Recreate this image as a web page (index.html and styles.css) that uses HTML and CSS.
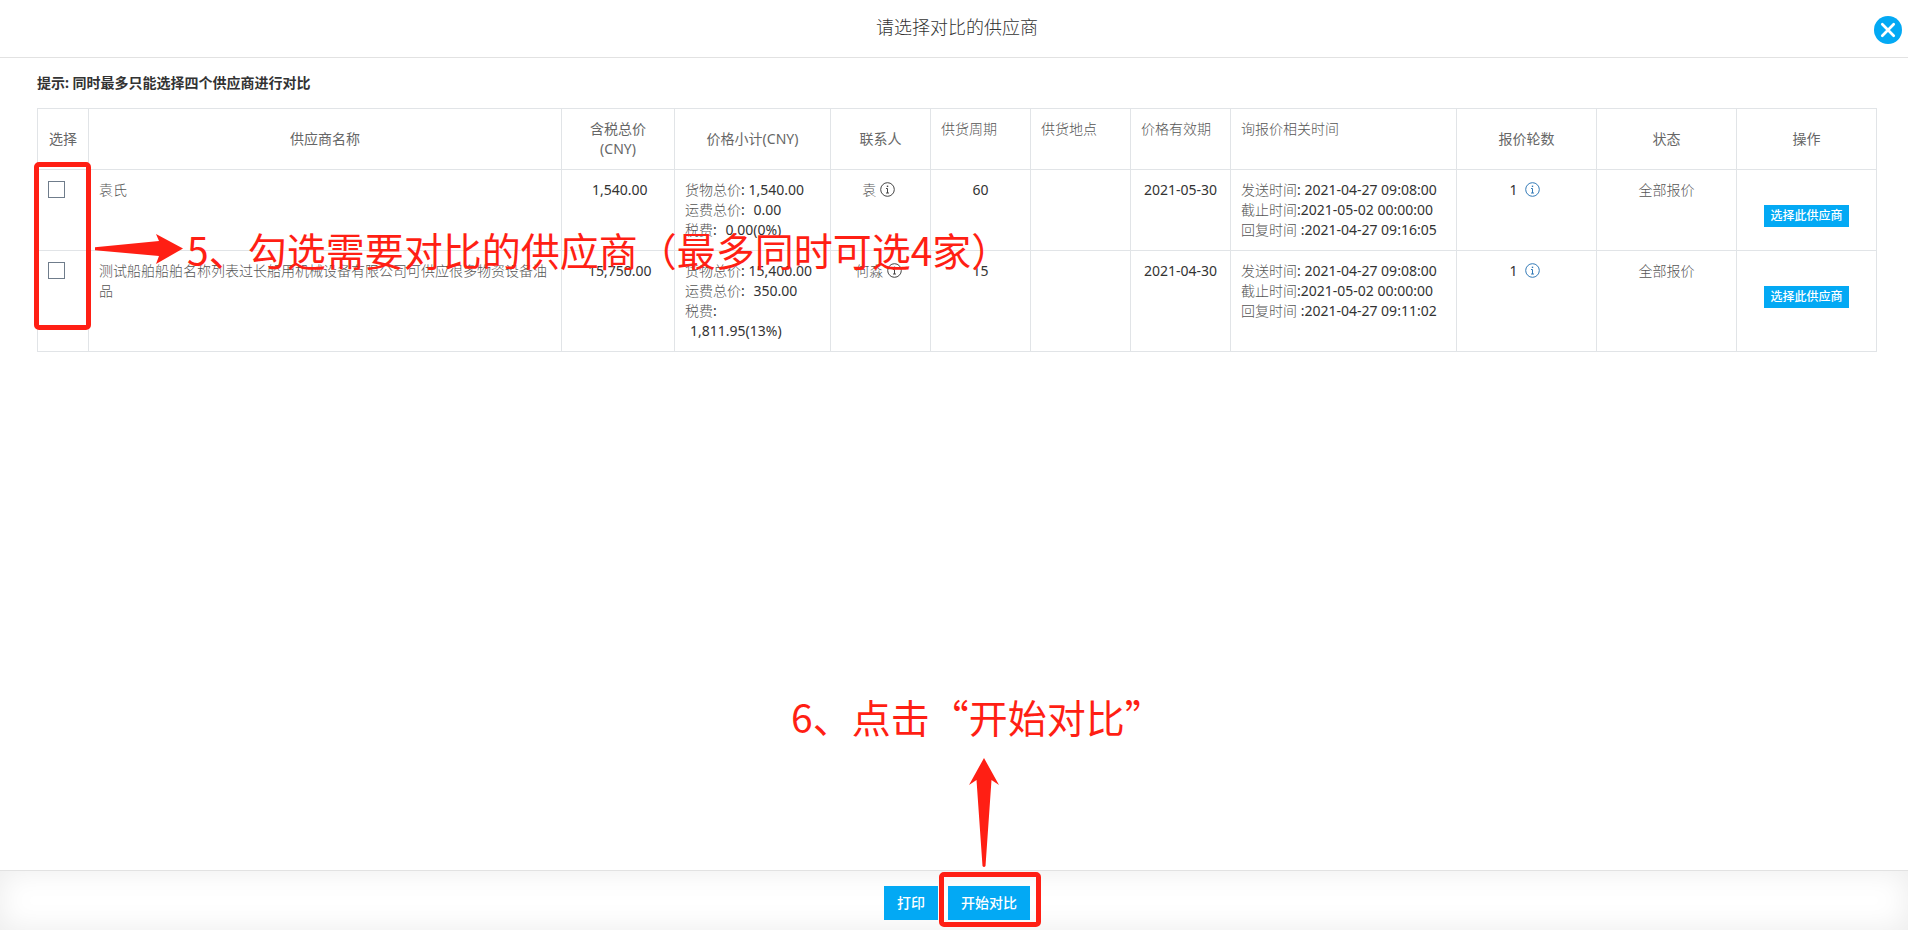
FILE: index.html
```html
<!DOCTYPE html>
<html lang="zh-CN">
<head>
<meta charset="utf-8">
<title>请选择对比的供应商</title>
<link rel="stylesheet" href="styles.css">
</head>
<body>
<svg class="sprite" aria-hidden="true">
  <symbol id="icon-info" viewBox="0 0 15 15">
    <circle cx="7.5" cy="7.5" r="6.8" fill="none" stroke="currentColor" stroke-width="1"/>
    <path d="M6 6.5h1.5v4.5M6 11h3" fill="none" stroke="currentColor" stroke-width="1"/>
    <rect x="6.8" y="3.6" width="1.4" height="1.4" fill="currentColor"/>
  </symbol>
</svg>

<header class="dialog-header">
  <h1 class="dialog-title">请选择对比的供应商</h1>
  <button class="close-button" type="button" aria-label="关闭">
    <svg viewBox="0 0 28 28" width="28" height="28"><circle cx="14" cy="14" r="14" fill="#03a9f4"/><path d="M8.3 8.3l11.4 11.4M19.7 8.3l-11.4 11.4" stroke="#fff" stroke-width="2.7" stroke-linecap="round"/></svg>
  </button>
</header>

<main class="dialog-body">
  <p class="tip">提示: 同时最多只能选择四个供应商进行对比</p>
  <div class="table-area">
    <table class="suppliers">
      <colgroup>
        <col class="col-select"><col><col class="col-total"><col class="col-price">
        <col class="col-short"><col class="col-short"><col class="col-short"><col class="col-short">
        <col class="col-time"><col class="col-medium"><col class="col-medium"><col class="col-medium">
      </colgroup>
      <thead>
        <tr>
          <th>选择</th>
          <th>供应商名称</th>
          <th>含税总价<br>(CNY)</th>
          <th>价格小计(CNY)</th>
          <th>联系人</th>
          <th class="plain">供货周期</th>
          <th class="plain">供货地点</th>
          <th class="plain">价格有效期</th>
          <th class="plain">询报价相关时间</th>
          <th>报价轮数</th>
          <th>状态</th>
          <th>操作</th>
        </tr>
      </thead>
      <tbody>
        <tr>
          <td><input class="check" type="checkbox" aria-label="选择 袁氏"></td>
          <td>袁氏</td>
          <td class="center num">&nbsp;1,540.00</td>
          <td>货物总价<span class="num">: 1,540.00</span><br>运费总价<span class="num">: <span class="amount">0.00</span></span><br>税费<span class="num">: <span class="amount">0.00(0%)</span></span></td>
          <td class="center">袁 <svg class="info"><use href="#icon-info"/></svg>&nbsp;</td>
          <td class="center num">60</td>
          <td></td>
          <td class="center num">2021-05-30</td>
          <td>发送时间<span class="num">: 2021-04-27 09:08:00</span><br>截止时间<span class="num">:2021-05-02 00:00:00</span><br>回复时间<span class="num"> :2021-04-27 09:16:05</span></td>
          <td class="center"><span class="num">1</span>&nbsp; <svg class="info info-link"><use href="#icon-info"/></svg>&nbsp;</td>
          <td class="center">全部报价</td>
          <td class="action"><button class="pick" type="button">选择此供应商</button></td>
        </tr>
        <tr>
          <td><input class="check" type="checkbox" aria-label="选择 测试船舶"></td>
          <td>测试船舶船舶名称列表过长船用机械设备有限公司可供应很多物资设备油品</td>
          <td class="center num">&nbsp;15,750.00</td>
          <td>货物总价<span class="num">: 15,400.00</span><br>运费总价<span class="num">: <span class="amount">350.00</span></span><br>税费<span class="num">:<br><span class="amount">1,811.95(13%)</span></span></td>
          <td class="center">何淼 <svg class="info"><use href="#icon-info"/></svg>&nbsp;</td>
          <td class="center num">15</td>
          <td></td>
          <td class="center num">2021-04-30</td>
          <td>发送时间<span class="num">: 2021-04-27 09:08:00</span><br>截止时间<span class="num">:2021-05-02 00:00:00</span><br>回复时间<span class="num"> :2021-04-27 09:11:02</span></td>
          <td class="center"><span class="num">1</span>&nbsp; <svg class="info info-link"><use href="#icon-info"/></svg>&nbsp;</td>
          <td class="center">全部报价</td>
          <td class="action"><button class="pick" type="button">选择此供应商</button></td>
        </tr>
      </tbody>
    </table>
    <div class="frame frame-select"></div>
    <div class="note note-select">
      <svg width="88" height="30" viewBox="0 0 88 30"><path d="M0 13.2L64 7L61 0L88 14.5L61 30L64 22L0 16.2Z" fill="#ff1f14"/></svg>
      <span>5、勾选需要对比的供应商（最多同时可选4家）</span>
    </div>
  </div>
</main>

<footer class="dialog-footer">
  <button class="primary" type="button">打印</button>
  <div class="compare">
    <button class="primary" type="button">开始对比</button>
    <div class="frame frame-compare"></div>
    <div class="note note-compare">
      <span>6、点击“开始对比”</span>
      <svg width="30" height="110" viewBox="0 0 30 110"><path d="M15 0L30 27L22.5 22L16.5 108Q15 110 13.5 108L7.5 22L0 27Z" fill="#ff1f14"/></svg>
    </div>
  </div>
</footer>
</body>
</html>
```

FILE: styles.css
```css
* {
  box-sizing: border-box;
}

body {
  display: flex;
  flex-direction: column;
  min-height: 100vh;
  margin: 0;
  background: #fff;
  color: #555;
  font: 300 14px/20px "Noto Sans", "Noto Sans CJK SC", sans-serif;
}

button {
  padding: 0;
  border: 0;
  font-family: inherit;
  cursor: pointer;
}

.sprite {
  position: absolute;
  width: 0;
  height: 0;
}

.dialog-header {
  display: grid;
  grid-template-columns: 1fr auto 1fr;
  align-items: center;
  height: 58px;
  padding: 0 6px;
  border-bottom: 1px solid #e2e2e2;
}

.dialog-title {
  grid-column: 2;
  margin: 0 0 4px 6px;
  color: #333;
  font-size: 18px;
  font-weight: 300;
  line-height: 24px;
}

.close-button {
  justify-self: end;
  height: 28px;
  margin-top: 3px;
  background: none;
}

.close-button svg {
  display: block;
}

.dialog-body {
  flex: 1;
  padding: 15px 31px 20px 37px;
}

.tip {
  margin: 0 0 15px;
  color: #333;
  font-weight: 700;
}

.table-area {
  position: relative;
}

.suppliers {
  width: 100%;
  border-collapse: collapse;
  table-layout: fixed;
}

.col-select { width: 51px; }
.col-total { width: 113px; }
.col-price { width: 156px; }
.col-short { width: 100px; }
.col-time { width: 226px; }
.col-medium { width: 140px; }

.suppliers th,
.suppliers td {
  padding: 10px;
  border: 1px solid #e1e4e7;
  text-align: left;
  vertical-align: top;
}

.suppliers th {
  color: #666;
  font-weight: 400;
  text-align: center;
  vertical-align: middle;
}

.suppliers th.plain {
  color: #555;
  font-weight: 300;
  text-align: left;
  vertical-align: top;
}

.suppliers .center {
  text-align: center;
}

.num {
  color: #333;
  font-weight: 400;
}

.amount {
  margin-left: 5px;
}

.check {
  display: block;
  width: 17px;
  height: 17px;
  margin: 1px 0;
  border: 1px solid #6f7c8b;
  background: #fff;
  appearance: none;
}

.info {
  width: 15px;
  height: 15px;
  vertical-align: -2px;
  color: #444;
}

.info-link {
  color: #337ab7;
}

.suppliers .action {
  padding: 35px 10px 10px;
  text-align: center;
}

.pick {
  display: inline-block;
  height: 22px;
  padding: 0 6px;
  background: #03a9f4;
  color: #fff;
  font-size: 12px;
  font-weight: 500;
  line-height: 22px;
  vertical-align: top;
}

.dialog-footer {
  display: flex;
  justify-content: center;
  gap: 10px;
  height: 60px;
  padding: 15px 0 10px 6px;
  border-top: 1px solid #e2e2e2;
  box-shadow: inset 0 0 30px rgba(0, 0, 0, 0.08);
}

.primary {
  height: 34px;
  padding: 0 13px;
  background: #03a9f4;
  color: #fff;
  font-size: 14px;
  font-weight: 500;
  line-height: 34px;
}

.compare {
  position: relative;
}

.frame {
  position: absolute;
  border: 5px solid #ff1f14;
  border-radius: 5px;
  pointer-events: none;
}

.frame-select {
  top: 54px;
  left: -3px;
  width: 57px;
  height: 168px;
}

.frame-compare {
  inset: -14px -11px -7px -9px;
}

.note {
  position: absolute;
  display: flex;
  align-items: center;
  color: #ff1f14;
  font: 400 39px/48px "Noto Sans CJK SC", sans-serif;
  white-space: nowrap;
  pointer-events: none;
}

.note-select {
  top: 117px;
  left: 58px;
  gap: 4px;
}

.note-compare {
  bottom: 52px;
  left: -157px;
  flex-direction: column;
  align-items: flex-start;
  gap: 18px;
}

.note-compare svg {
  margin-left: 178px;
}
```
